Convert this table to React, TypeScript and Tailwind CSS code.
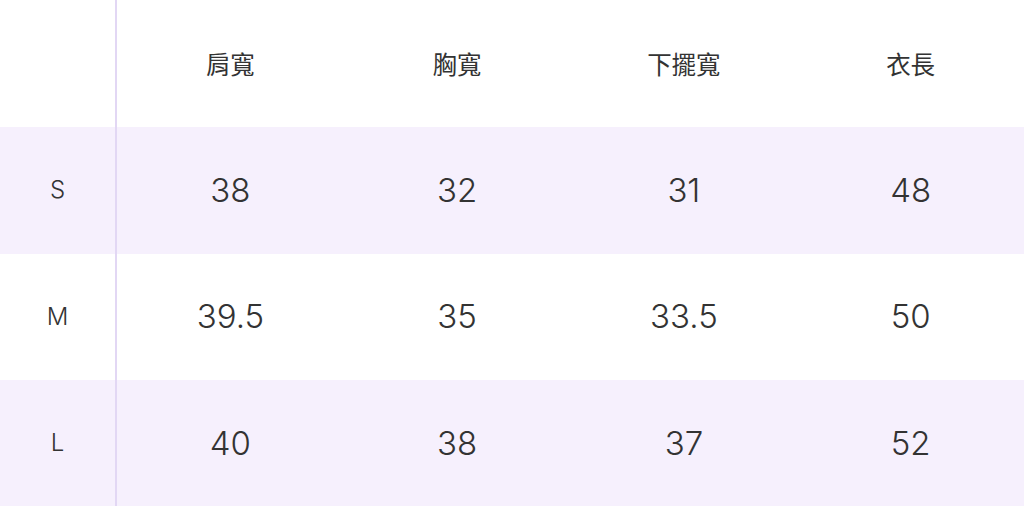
const cols = ["肩寬", "胸寬", "下擺寬", "衣長"]

const rows = [
  { size: "S", values: ["38", "32", "31", "48"] },
  { size: "M", values: ["39.5", "35", "33.5", "50"] },
  { size: "L", values: ["40", "38", "37", "52"] },
]

export default function App() {
  return (
    <div
      className="w-[1024px] h-[506px] bg-white text-[#333333] overflow-hidden"
      style={{ fontFamily: 'Inter, "Noto Sans CJK TC", sans-serif' }}
    >
      {/* header */}
      <div className="flex h-[127px]">
        <div className="w-[117px] shrink-0 border-r-2 border-[#e2d7f4]" />
        {cols.map((c) => (
          <div key={c} className="flex-1 flex items-center justify-center text-[24.5px] pt-[3px]">
            {c}
          </div>
        ))}
      </div>

      {rows.map((r, i) => (
        <div
          key={r.size}
          className={`flex h-[126.5px] ${i % 2 === 0 ? "bg-[#f6f0fd]" : "bg-white"}`}
        >
          <div className="w-[117px] shrink-0 border-r-2 border-[#e2d7f4] flex items-center justify-center text-[24px] font-light">
            {r.size}
          </div>
          {r.values.map((v, j) => (
            <div key={j} className="flex-1 flex items-center justify-center text-[33px] font-light">
              {v}
            </div>
          ))}
        </div>
      ))}
    </div>
  )
}
